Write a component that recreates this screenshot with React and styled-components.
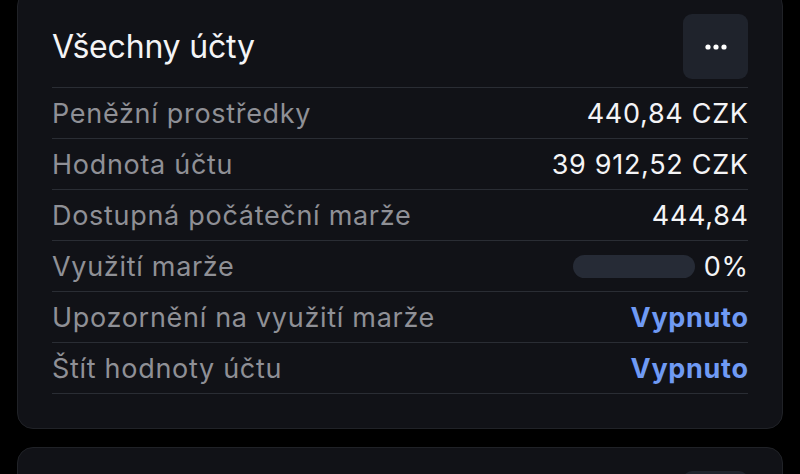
import styled, { createGlobalStyle } from "styled-components";

const GlobalStyle = createGlobalStyle`
  html, body {
    margin: 0;
    padding: 0;
    background: #000;
    overflow: hidden;
  }
  body {
    font-family: Inter, "Noto Sans", "Liberation Sans", sans-serif;
  }
`;

const rows = [
  { label: "Peněžní prostředky", value: "440,84 CZK" },
  { label: "Hodnota účtu", value: "39 912,52 CZK" },
  { label: "Dostupná počáteční marže", value: "444,84" },
  { label: "Využití marže", value: "0%", bar: true },
  { label: "Upozornění na využití marže", value: "Vypnuto", link: true },
  { label: "Štít hodnoty účtu", value: "Vypnuto", link: true },
];

const App = () => {
  return (
    <>
      <GlobalStyle />
      <Page>
        <Card $first>
          <Header>
            <Title>Všechny účty</Title>
            <MoreButton aria-label="Více">
              <svg width="22" height="6" viewBox="0 0 22 6">
                <circle cx="3" cy="3" r="2.6" fill="#fff" />
                <circle cx="11" cy="3" r="2.6" fill="#fff" />
                <circle cx="19" cy="3" r="2.6" fill="#fff" />
              </svg>
            </MoreButton>
          </Header>
          <List>
            {rows.map((row) => (
              <Row key={row.label}>
                <Label>{row.label}</Label>
                <ValueWrap>
                  {row.bar && <Bar />}
                  <Value $link={row.link}>{row.value}</Value>
                </ValueWrap>
              </Row>
            ))}
          </List>
        </Card>
        <Card>
          <Header>
            <Title />
            <MoreButton />
          </Header>
        </Card>
      </Page>
    </>
  );
};

const Page = styled.div`
  display: flex;
  flex-direction: column;
  gap: 18px;
  padding: 0 17px;
`;

const Card = styled.div`
  margin-top: ${(p) => (p.$first ? "-10px" : "0")};
  background: #111217;
  border: 1px solid #202227;
  border-radius: 16px;
  padding: 23px 34px 34px;
`;

const Header = styled.div`
  display: flex;
  align-items: center;
  justify-content: space-between;
  padding-bottom: 8px;
`;

const Title = styled.h2`
  margin: 0;
  font-size: 32px;
  font-weight: 400;
  color: #f4f4f6;
  letter-spacing: -0.2px;
`;

const MoreButton = styled.button`
  width: 65px;
  height: 65px;
  border: 0;
  border-radius: 9px;
  background: #1f232c;
  display: flex;
  align-items: center;
  justify-content: center;
  padding: 0;
`;

const List = styled.div`
  display: flex;
  flex-direction: column;
  border-top: 1px solid #2a2d34;
`;

const Row = styled.div`
  height: 50px;
  display: flex;
  align-items: center;
  justify-content: space-between;
  border-bottom: 1px solid #2a2d34;
`;

const Label = styled.span`
  font-size: 27px;
  color: #8f9096;
  letter-spacing: 0.7px;
`;

const ValueWrap = styled.div`
  display: flex;
  align-items: center;
  gap: 9px;
`;

const Bar = styled.div`
  width: 122px;
  height: 23px;
  border-radius: 12px;
  background: #262b36;
`;

const Value = styled.span`
  font-size: 27px;
  color: ${(p) => (p.$link ? "#6f9af4" : "#f4f4f6")};
  font-weight: ${(p) => (p.$link ? 700 : 400)};
  letter-spacing: 0.7px;
  margin-right: -0.7px;
`;

export default App;
